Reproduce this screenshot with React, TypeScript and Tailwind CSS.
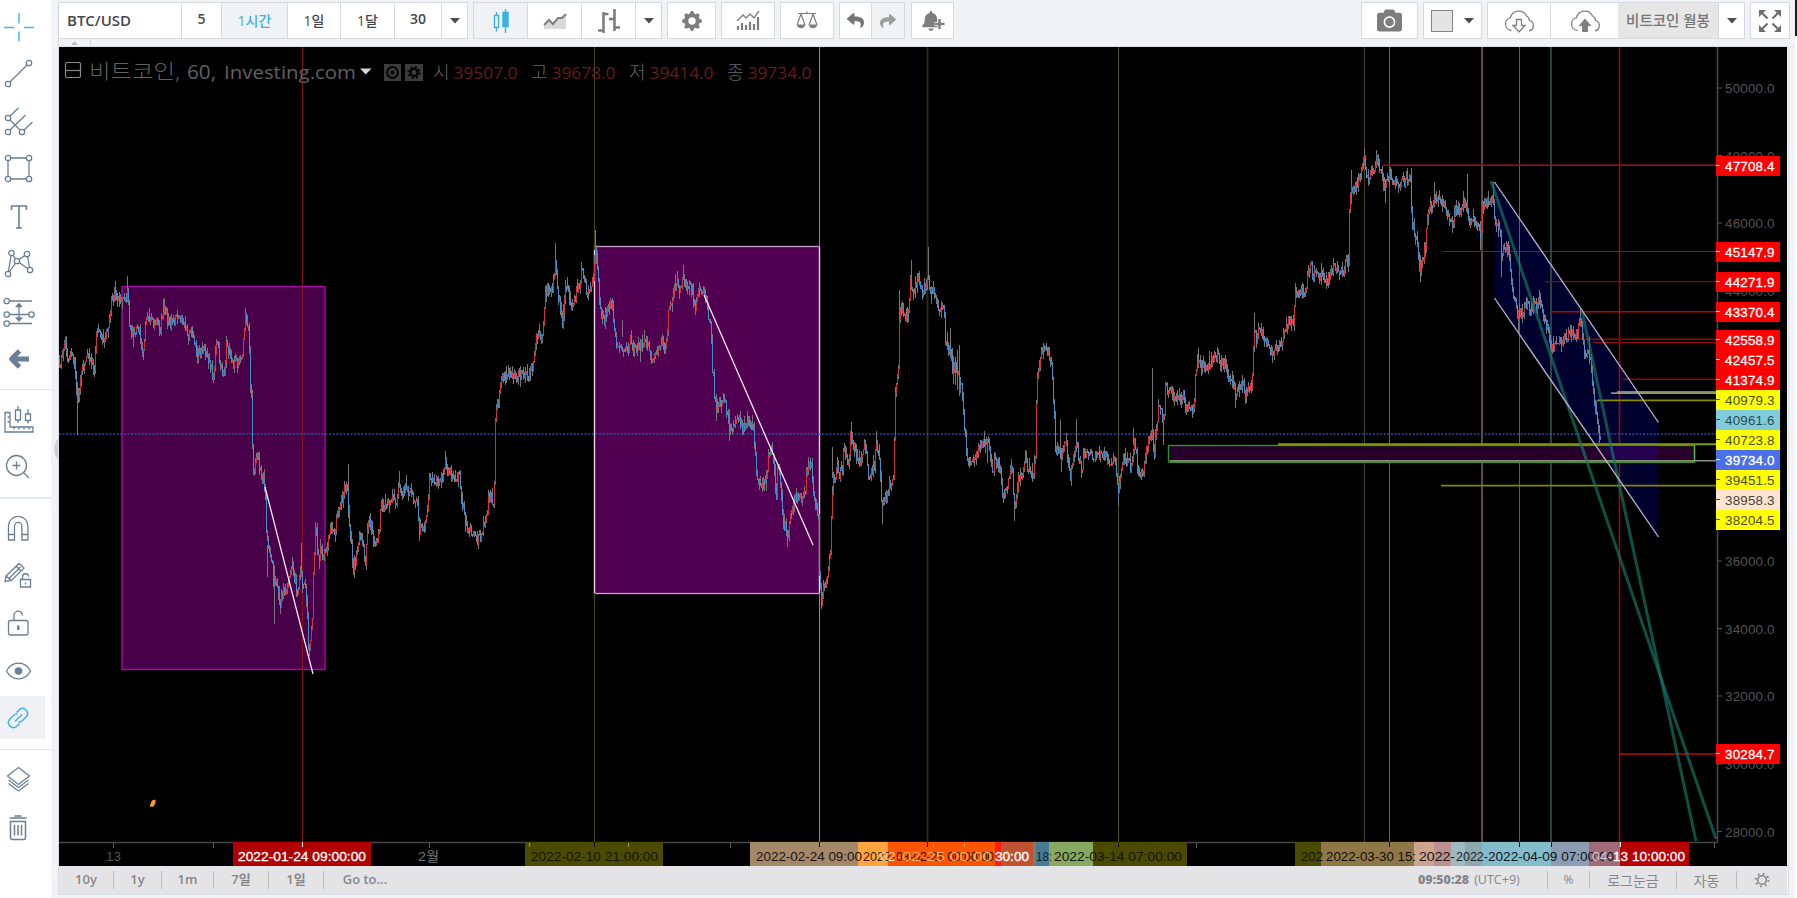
import React from "react";
import { FaCamera, FaReply, FaShare, FaBell } from "react-icons/fa";
import { BsGearFill } from "react-icons/bs";

const FONT = '"Open Sans", "Noto Sans CJK KR", sans-serif';
const ARIAL = '"Liberation Sans", "Noto Sans CJK KR", sans-serif';

/* ---------- price series: anchors in thirds of a pixel, relative to an origin ---------- */
type Segment = { ox: number; oy: number; pts: string };

const SEGMENTS: Segment[] = [
  {
    ox: 60,
    oy: 240,
    pts: "-4,370 0,385 8,350 14,300 18,320 24,370 32,345 40,360 46,380 50,450 52,480 56,480 58,440 62,420 68,385 76,375 82,325 90,345 98,370 104,385 108,290 114,270 122,285 130,290 138,290 146,260 152,215 154,170 160,180 166,165 172,165 178,190 184,180 190,180 196,175 200,170 203,140 206,200 210,265 218,290 224,285 232,270 238,270 244,300 249,350 253,300 256,240 262,235 268,225 276,245 284,255 292,245 298,260 302,270 306,225 312,205 318,210 324,235 332,255 340,240 350,240 356,220 364,235 372,245 380,270 388,285 396,270 404,300 410,335 418,350 426,325 434,335 444,355 452,390 460,400 466,380 470,310 476,310 480,380 486,390 490,410 496,390 500,320 504,320 510,345 518,375 528,365 536,355 546,350 552,300 556,225 560,240 566,265 568,310 570,430 576,480 578,570 580,690 584,700 588,650 594,650 600,700 604,690 608,700 614,730 618,820 622,900 630,930 638,980 644,1020 650,1030 656,1060 662,1090 668,1050 676,1050 684,1040 690,1020 694,980 700,980 706,1020 714,1050 718,1020 724,990 728,1030 736,1040 742,1090 746,1200 750,1240 754,1200 758,1120 762,970 766,860 772,900 778,950 784,930 790,960 796,920 802,920 810,870 816,880 824,880 832,820 840,800 848,770 856,740 862,750 866,820 870,880 876,930 880,980 886,970 892,930 898,890 904,890 910,910 916,970 920,920 926,840 934,850 942,900 948,920 954,880 960,850 966,790 974,790 984,790 994,785 1002,760 1008,795 1014,750 1018,720 1024,760 1032,750 1040,745 1050,760 1058,765 1068,790 1074,780 1078,870 1086,860 1096,850 1104,810 1110,710 1120,715 1132,720 1142,710 1148,720 1156,670 1164,690 1172,690 1180,705 1190,720 1200,700 1204,780 1212,800 1220,870 1230,870 1242,870 1248,910 1256,890 1264,900 1270,850 1280,830 1286,770 1294,760 1302,800 1306,600 1308,520",
  },
  {
    ox: 480,
    oy: 220,
    pts: "52,560 58,550 62,480 68,465 78,465 88,465 98,460 108,465 118,462 130,462 142,465 150,455 160,440 164,400 170,340 178,340 186,350 192,320 196,230 204,195 212,215 220,200 226,120 230,150 234,220 242,260 250,310 256,190 264,200 272,260 282,240 292,210 300,200 306,150 314,190 322,220 330,210 336,180 341,180 345,110 350,90 354,150 358,220 364,290 374,300 382,270 390,250 398,250 404,340 410,375 418,385 428,395 438,385 446,390 452,340 458,395 466,385 476,380 486,370 494,360 502,370 510,395 518,435 526,410 536,395 544,350 552,390 560,370 566,270 576,250 584,200 592,190 600,210 610,180 618,200 626,210 634,190 640,210 646,260 652,230 658,200 666,215 674,230 680,240 686,290 692,310 696,410 702,490 708,560 716,550 724,555 734,535 740,570 746,610 754,620 762,605 770,600 778,590 786,625 796,610 804,605 814,615 822,640 828,740 832,790 842,790 852,790 860,780 866,720 872,690 880,700 886,760 889,860 892,750 898,740 904,800 910,910 918,920 924,950 930,900 938,860 946,830 954,830 962,820 970,840 978,810 982,740 988,720 996,740 1002,830 1008,860 1014,880 1018,940 1020,1060 1024,1150 1030,1110 1036,1090 1044,1050 1052,990 1055,900 1058,800 1064,770 1072,750 1080,760 1088,750 1092,670 1098,710 1106,720 1112,650 1118,660 1126,690 1134,720 1142,720 1150,690 1158,690 1164,740 1168,780 1176,750 1184,730 1188,670 1194,690 1200,740 1206,860 1212,850 1220,840 1230,790 1238,790 1243,790 1246,540 1250,490 1256,450 1258,300 1264,270 1272,290 1284,280 1288,250 1292,150 1296,220 1304,220 1312,180 1318,190 1326,220 1334,200 1342,200 1344,150 1350,220 1360,210 1370,230 1376,270",
  },
  {
    ox: 900,
    oy: 240,
    pts: "118,210 126,215 132,180 135,280 140,310 148,330 152,320 158,390 166,380 176,390 182,430 188,480 194,560 198,620 204,665 212,655 222,655 232,640 240,610 250,610 260,605 268,620 274,680 278,710 284,670 290,650 298,670 304,700 308,770 314,770 322,740 330,690 336,670 340,740 344,800 350,760 358,710 366,710 374,660 382,680 390,700 398,700 404,670 408,620 412,420 418,370 426,340 434,320 442,340 450,350 456,380 460,470 464,540 466,630 476,640 486,640 492,620 498,610 504,650 510,710 518,670 526,620 530,600 536,650 546,700 552,650 562,645 572,640 584,645 596,645 608,640 620,650 628,680 636,665 644,660 650,710 654,770 660,720 666,680 674,650 684,665 694,690 700,640 704,600 710,660 720,710 728,690 736,650 744,610 752,600 758,590 764,640 770,560 776,510 784,510 792,540 796,440 804,450 812,440 822,480 832,465 842,475 852,465 856,510 866,495 876,515 884,480 888,390 896,370 906,375 918,385 930,370 940,350 948,340 958,355 968,365 978,390 988,420 998,420 1008,470 1018,440 1028,430 1038,460 1048,440 1056,430 1060,350 1064,280 1070,300 1078,260 1088,280 1100,300 1110,340 1120,340 1130,320 1138,310 1146,310 1152,260 1160,260 1168,240 1176,255 1182,250 1185,155 1196,155 1208,150 1220,150 1226,90 1232,60 1238,110 1246,105 1256,110 1268,105 1280,115 1290,110 1300,85 1310,80 1320,90 1330,95 1338,60 1344,60",
  },
  {
    ox: 1250,
    oy: 130,
    pts: "296,390 298,250 302,190 310,180 320,170 330,140 338,110 344,80 350,130 358,140 366,125 374,115 382,90 390,110 398,140 406,160 414,140 422,140 432,150 440,150 450,160 458,150 468,160 478,140 482,150 486,270 494,300 502,320 508,420 514,410 522,370 528,350 532,270 538,230 546,240 554,200 562,215 572,215 582,210 590,260 598,270 606,285 616,240 626,245 634,230 642,215 650,220 656,280 666,260 678,270 686,290 692,330 698,230 706,210 716,210 726,210 732,240 738,290 748,290 756,370 762,360 770,345 776,370 784,440 790,490 798,510 804,560 810,545 820,540 830,520 840,540 850,530 860,530 870,510 878,540 886,580 894,600 900,630 906,660 914,640 926,635 938,630 950,620 962,600 974,615 984,610 990,560 998,590 1002,680 1010,670 1018,655 1022,700 1028,760 1034,820 1040,840 1044,880 1048,940 1052,930",
  },
];

/* long shadows: x, top, bottom */
const SPIKES: number[][] = [
  [77, 400, 435], [115, 281, 300], [127, 276, 300], [164, 298, 312], [245, 308, 320], [274, 565, 624],
  [348, 464, 494], [399, 471, 484], [445, 451, 465], [301, 543, 570], [267, 545, 577],
  [555, 243, 262], [595, 230, 250], [683, 265, 280], [716, 394, 421], [729, 410, 441], [787, 530, 547],
  [832, 447, 478], [851, 422, 440], [876, 431, 446], [882, 500, 524], [899, 290, 320], [911, 260, 280],
  [928, 247, 275], [950, 328, 350], [953, 356, 384], [955, 357, 385], [957, 350, 390], [959, 345, 396], [987, 441, 463],
  [1014, 500, 521], [1060, 420, 450], [1061, 450, 472], [1076, 419, 450], [1152, 368, 440],
  [1163, 420, 445], [1133, 428, 445], [1198, 348, 365], [1235, 392, 408], [1254, 313, 340],
  [1351, 170, 195], [1364, 148, 165], [1376, 150, 165], [1411, 168, 185], [1434, 182, 200],
  [1467, 174, 205], [1480, 235, 250], [1501, 230, 277], [1493, 182, 200], [1539, 290, 305], [1518, 315, 332],
  [1385, 180, 203], [1420, 255, 282], [640, 340, 362], [622, 320, 337],
];

const ANCHORS: [number, number][] = SEGMENTS.flatMap((s) =>
  s.pts.split(" ").map((p): [number, number] => {
    const [x, y] = p.split(",").map(Number);
    return [s.ox + x / 3, s.oy + y / 3];
  })
);

function buildCandles() {
  let seed = 90127;
  const rnd = () => {
    seed = (seed * 1103515245 + 12345) % 2147483648;
    return seed / 2147483648;
  };
  let up = "";
  let down = "";
  let wick = "";
  let i = 0;
  let prev = ANCHORS[0][1];
  for (let x = 59; x < 1601; x += 0.7) {
    while (i < ANCHORS.length - 2 && ANCHORS[i + 1][0] < x) i++;
    const [x0, y0] = ANCHORS[i];
    const [x1, y1] = ANCHORS[i + 1];
    const t = Math.min(1, Math.max(0, (x - x0) / (x1 - x0)));
    const close = y0 + (y1 - y0) * t + (rnd() - 0.5) * 10;
    const top = Math.min(prev, close);
    const bottom = Math.max(prev, close);
    const hi = top - rnd() * rnd() * 10;
    const lo = bottom + rnd() * rnd() * 10;
    const cx = Math.floor(x) + 0.5;
    wick += `M${cx} ${hi.toFixed(1)}V${lo.toFixed(1)}`;
    const body = `M${cx} ${top.toFixed(1)}V${(bottom + 1).toFixed(1)}`;
    if (close < prev) up += body;
    else down += body;
    prev = close;
  }
  for (const [x, a, b] of SPIKES) wick += `M${x + 0.5} ${a}V${b}`;
  return { up, down, wick };
}

const CANDLES = buildCandles();

/* ---------- axis data ---------- */
const PRICE_TICKS: [string, number][] = [
  ["50000.0", 88], ["48000.0", 155.5], ["46000.0", 223], ["44000.0", 290.5],
  ["36000.0", 561], ["34000.0", 628.5], ["32000.0", 696], ["30000.0", 764], ["28000.0", 831.5],
];

const PRICE_TAGS: [string, number, string, string][] = [
  ["47708.4", 166, "#ff0000", "#fff"], ["45147.9", 252, "#ff0000", "#fff"], ["44271.9", 282, "#ff0000", "#fff"],
  ["43370.4", 312, "#ff0000", "#fff"], ["42558.9", 340, "#ff0000", "#fff"], ["42457.5", 360, "#ff0000", "#fff"],
  ["41374.9", 380, "#ff0000", "#fff"], ["40979.3", 400, "#ffff00", "#4a4a20"], ["40961.6", 420, "#80ccdb", "#2f4a50"],
  ["40723.8", 440, "#ffff00", "#4a4a20"], ["39734.0", 460, "#4a6fe8", "#fff"], ["39451.5", 480, "#ffff00", "#4a4a20"],
  ["38958.3", 500, "#fde4cf", "#4c423a"], ["38204.5", 520, "#ffff00", "#4a4a20"], ["30284.7", 754, "#ff0000", "#fff"],
];

const V_LINES: [number, string, number][] = [
  [302.5, "#8c0d12", 1], [594.5, "#4a4a10", 1], [819.5, "#a3836a", 1], [927.5, "#30300a", 1.8], [1118.5, "#505018", 1],
  [1364.5, "#44440f", 1], [1389.5, "#6b5c50", 1], [1482, "#5c4a45", 2], [1519.5, "#426a70", 1], [1551, "#284246", 2],
  [1619.5, "#8e1010", 1.6],
];

const H_LINES: [number, number, string, number][] = [
  [1383, 165.3, "#a80c0c", 1.4], [1443, 251.5, "#a80c0c", 1.2], [1545, 281.7, "#840a0a", 1.2], [1551, 311.7, "#a80c0c", 1.4],
  [1560, 339.2, "#8c0a0a", 1.4], [1593, 342.6, "#8c0a0a", 1.4], [1623, 379.2, "#8c0a0a", 1.4],
  [1617, 391.8, "#b9b93c", 1.2], [1611, 393.2, "#b8ccb8", 1.2], [1597, 400.4, "#8c8c00", 1.6],
  [1441, 485.7, "#868600", 1.8], [1620, 754, "#b00c0c", 1.3],
];

const TIME_BANDS: [number, number, string][] = [
  [232.5, 370.5, "#b00000"], [525, 663, "#4a4a00"], [750, 858, "#a58868"], [858, 888, "#ffa53f"], [888, 995, "#ff5500"],
  [995, 1001, "#ff1a10"], [1001, 1033, "#c0522f"], [1033, 1036, "#7c8060"], [1036, 1049, "#487a96"],
  [1049, 1093, "#86a860"], [1093, 1187, "#4a4a00"], [1295, 1321, "#4a4a00"], [1321, 1414, "#8f7748"],
  [1414, 1434, "#cfa48e"], [1434, 1451, "#bb9090"], [1451, 1465, "#9cbac0"], [1465, 1482, "#8ea8b0"],
  [1482, 1551, "#84bccb"], [1551, 1589, "#8c9cb2"], [1589, 1620, "#a06a78"], [1620, 1689, "#b80000"],
];

const TIME_TEXTS: [string, number, number, string, boolean][] = [
  ["13", 106, 15, "#55555a", false],
  ["2월", 418, 21, "#77777a", false],
  ["2022-01-24 09:00:00", 238, 128, "#ffffff", true],
  ["2022-02-10 21:00:00", 531, 127, "#14140a", false],
  ["2022-02-24 09:00", 756, 106, "#1a1510", false],
  ["2022-", 863, 32, "#3a1c08", false],
  ["02-", 880, 20, "#ffd9a0", false],
  ["03-02-21 00:00:00", 896, 98, "#2c1004", false],
  ["02-25 00:00", 902, 90, "#ffb060", false],
  ["30:00", 995, 34, "#ffffff", true],
  ["18:", 1036, 16, "#14202a", false],
  ["2022-03-14 07:00:00", 1054, 128, "#14140a", false],
  ["202", 1301, 22, "#14140a", false],
  ["2022-03-30 15:", 1326, 90, "#100c06", false],
  ["2022-", 1419, 36, "#20140e", false],
  ["2022-", 1456, 32, "#182428", false],
  ["2022-04-09 07:00:00", 1488, 126, "#0a1418", false],
  ["04-", 1592, 20, "#dcc8d0", false],
  ["13 10:00:00", 1613, 72, "#ffffff", true],
];

function Chart() {
  return (
    <svg width={1728} height={819} viewBox="59 47 1728 819" className="block bg-black">
      <path d="M1494.5 182L1658.5 422.5V537L1494.5 298Z" fill="#00002e" />
      <rect x={122} y={286.5} width={203} height={383} fill="#480048" stroke="#a50aa8" strokeWidth={1.4} />
      <rect x={594.5} y={246.5} width={225} height={347} fill="#510051" stroke="#c9a0cc" strokeWidth={1.3} />

      {V_LINES.map(([x, c, w]) => (
        <line key={x} x1={x} x2={x} y1={47} y2={842} stroke={c} strokeWidth={w} />
      ))}
      <path d="M594.5 250V593M819.5 247V593" stroke="#e6d2e2" strokeWidth={1.2} />

      <rect x={1168.5} y={445.5} width={526} height={16.5} fill="#26002a" stroke="#2f8f2f" strokeWidth={1.4} />
      <path d="M1603 446L1611 460H1658V446Z" fill="#230050" />
      <line x1={1278} x2={1716} y1={444.3} y2={444.3} stroke="#7f9c08" strokeWidth={2} />
      <line x1={1170} x2={1716} y1={460.8} y2={460.8} stroke="#8d8f78" strokeWidth={1.6} />
      <line x1={1170} x2={1694} y1={462.3} y2={462.3} stroke="#3f9f3f" strokeWidth={1} />
      <line x1={1694.5} x2={1694.5} y1={445} y2={462} stroke="#48c048" strokeWidth={1.2} />

      {H_LINES.map(([x, y, c, w]) => (
        <line key={y} x1={x} x2={1716} y1={y} y2={y} stroke={c} strokeWidth={w} />
      ))}
      <line x1={59} x2={1716} y1={434.2} y2={434.2} stroke="#3f5cb0" strokeWidth={1.3} strokeDasharray="2 1.6" />

      <g shapeRendering="crispEdges" fill="none" strokeWidth={1}>
        <path d={CANDLES.wick} stroke="#77757a" />
        <path d={CANDLES.up} stroke="#d0303a" />
        <path d={CANDLES.down} stroke="#3a94d8" strokeOpacity={0.82} />
      </g>

      <g stroke="#157864" strokeOpacity={0.68} strokeWidth={3}>
        <path d="M1491 181L1716 839" />
        <path d="M1582 311L1696 841" />
      </g>
      <path d="M1494.5 182L1658.5 422.5M1494.5 298L1658.5 537" stroke="#b9b4c8" strokeWidth={1.3} />
      <path d="M265 487L313 674M704 295L813 545" stroke="#f4e6f4" strokeWidth={1.3} />
      <path d="M150 805l2-4.500 3.500-1v3.500l-2 3.500-3 .5z" fill="#f5a020" />

      {/* legend */}
      <g stroke="#8a8a8a" fill="none" strokeWidth={1.2}>
        <rect x={65.5} y={62.5} width={15} height={15} rx={1.5} />
        <path d="M66 70.5H80" />
      </g>
      <g fontFamily={FONT} fontWeight={300}>
        <g fontSize={20} fill="#606060">
          <text x={89} y={78.5} textLength={91} lengthAdjust="spacingAndGlyphs">비트코인,</text>
          <text x={187} y={78.5} fontWeight={400} textLength={29} lengthAdjust="spacingAndGlyphs">60,</text>
          <text x={224} y={78.5} fontSize={19} fontWeight={400} textLength={132} lengthAdjust="spacingAndGlyphs">Investing.com</text>
        </g>
        <path d="M360 68.5H371.5L365.7 74.5Z" fill="#d8d8d8" />
        <g>
          <rect x={384} y={64} width={17} height={17} fill="#3c3c3c" />
          <circle cx={392.5} cy={72.5} r={5.4} fill="none" stroke="#050505" strokeWidth={2} />
          <circle cx={392.5} cy={72.5} r={2} fill="#050505" />
          <rect x={405} y={64} width={18} height={17} fill="#3c3c3c" />
          <circle cx={414} cy={72.5} r={3.6} fill="none" stroke="#050505" strokeWidth={2.4} />
          <circle cx={414} cy={72.5} r={5.6} fill="none" stroke="#050505" strokeWidth={2} strokeDasharray="2.2 2.2" />
        </g>
        {(
          [
            ["시", "39507.0", 433], ["고", "39678.0", 531], ["저", "39414.0", 629], ["종", "39734.0", 727],
          ] as [string, string, number][]
        ).map(([k, v, x]) => (
          <React.Fragment key={k}>
            <text x={x} y={78.5} fontSize={18} fill="#666666">{k}</text>
            <text x={x + 20.5} y={78.5} fontSize={17} fontWeight={400} fill="#641c1c" textLength={64} lengthAdjust="spacingAndGlyphs">{v}</text>
          </React.Fragment>
        ))}
      </g>

      {/* axes */}
      <path d="M59 842.5H1717.5M1717.5 47V842.5" stroke="#47474b" strokeWidth={1.6} fill="none" />
      <path d="M113.5 843v5M213.5 843v5M429.5 843v5M730.5 843v5M1196.5 843v5M1714.5 843v5" stroke="#55555a" />
      <g fontFamily={ARIAL} fontSize={13.4}>
        {PRICE_TICKS.map(([t, y]) => (
          <React.Fragment key={t}>
            <line x1={1717} x2={1722} y1={y} y2={y} stroke="#55555a" />
            <text x={1725} y={y + 5} fill="#535357" textLength={49.5}>{t}</text>
          </React.Fragment>
        ))}
        {PRICE_TAGS.map(([t, y, bg, fg]) => (
          <React.Fragment key={t}>
            <rect x={1716} y={y - 10} width={64} height={20} fill={bg} />
            <line x1={1716} x2={1720} y1={y - 0.5} y2={y - 0.5} stroke={fg} />
            <text x={1725} y={y + 5} fill={fg} stroke={fg} strokeWidth={fg === "#fff" ? 0.3 : 0} textLength={49.5}>{t}</text>
          </React.Fragment>
        ))}
      </g>
      <g shapeRendering="crispEdges">
        {TIME_BANDS.map(([a, b, c]) => (
          <rect key={a} x={a} y={842} width={b - a} height={24} fill={c} />
        ))}
      </g>
      <path d="M302.5 842v5M1620.5 842v5" stroke="#fff" />
      <path d="M594.5 842v5M819.5 842v5M927.5 842v5M1118.5 842v5M1389.5 842v5M1519.5 842v5M1551.5 842v5" stroke="#000" />
      <path d="M529.5 843v4M628.5 843v4M933.5 843v4M964.5 843v4" stroke="#d8d0a0" strokeOpacity={0.6} />
      <g fontFamily={ARIAL} fontSize={13}>
        {TIME_TEXTS.map(([t, x, w, c, strong]) => (
          <text key={t + x} x={x} y={861} fill={c} stroke={c} strokeWidth={strong ? 0.3 : 0} textLength={w} lengthAdjust="spacingAndGlyphs">
            {t}
          </text>
        ))}
      </g>
    </svg>
  );
}

/* ---------- left tool column ---------- */
const dot = (x: number, y: number) => <circle key={`${x}-${y}`} cx={x} cy={y} r={2.7} fill="#fff" />;

const TOOLS: Record<string, React.ReactNode> = {
  cross: <path d="M15 1v10.5M15 19.5v10M0 15.5h10.5M20 15.5h10" stroke="#4bb4e6" strokeWidth={1.5} />,
  trend: <><path d="M4 25L25 4" />{dot(4, 25)}{dot(25, 4)}</>,
  pitchfork: <><path d="M4 11l10.5-10M4 25L21.500 8M18 25l10.500-10M4 11l14 14" />{dot(4, 11)}{dot(4, 25)}{dot(18, 25)}</>,
  shape: <><path d="M4 4h21v21H4z" />{dot(4, 4)}{dot(25, 4)}{dot(4, 25)}{dot(25, 25)}</>,
  text: <path d="M7.500 8V4h15v4M15 4v22M12 26h6" strokeWidth={1.6} />,
  pattern: <><path d="M4 25L7.500 4L13 12L26 21L23 5L13 12Z" />{dot(7.5, 4)}{dot(23, 5)}{dot(13, 12)}{dot(4, 25)}{dot(26, 21)}</>,
  position: <><path d="M2 4h26M2 17.500h26M2 26.500h26M15 7v16" /><path d="M12.500 9.500L15 6.500l2.500 3zM12.500 21L15 24l2.500-3z" fill="#6a7f95" />{dot(2.700, 4)}{dot(2.700, 17.500)}{dot(2.700, 26.500)}{dot(27.500, 17.500)}</>,
  arrow: <path d="M25 15H8M15.500 7L7.500 15l8 8" strokeWidth={4.800} strokeLinejoin="round" />,
  measure: <path d="M1 7.500h5V22h23v5H1zM3.500 12H6M3.500 17H6M10 22v2.500M15 22v2.500M20 22v2.500M25 22v2.500M11.500 5h5v10h-5zM14 1v4M14 15v3M21.500 9h5v6.500h-5zM24 4v5M24 15.500v3" />,
  zoom: <><circle cx={12.500} cy={13.500} r={10} /><path d="M20 21l5 5M12.500 9.500v8M8.500 13.500h8" /></>,
  magnet: <path d="M4.500 27V13a9.700 9.700 0 0 1 19.400 0v14h-6V13a3.700 3.700 0 0 0-7.400 0v14zM4.500 21.500h6M17.900 21.500h6" />,
  pencil: <path d="M2 16L15 3.500l5 4.500L7.500 20.500L1 21.500zM12 6l5 5M2 16l5 4.500M5 18.500L16.500 7M16.500 19.500h10v7.500h-10zM18.500 19.500v-2.500a3 3 0 0 1 6-.5M21.500 22.500v2" />,
  lock: <><rect x={4.500} y={12.500} width={19.500} height={14.500} rx={2} /><path d="M10 12.500V7.500a4.300 4.300 0 0 1 8.600 0" /><path d="M14.300 17.500v4.500" strokeWidth={2.400} /></>,
  eye: <><path d="M2.500 16C8 5.500 21 5.500 26.500 16C21 26.500 8 26.500 2.500 16Z" /><circle cx={14.500} cy={16} r={3.800} fill="#6a7f95" stroke="none" /></>,
  link: <path d="M12.500 9.500l3-3a5 5 0 0 1 7 7l-4 4a5 5 0 0 1-4 1.400M15.500 20.500l-3 3a5 5 0 0 1-7-7l4-4a5 5 0 0 1 4-1.400M11 18.500l7-7" stroke="#3fb0ea" strokeWidth={1.500} />,
  layers: <path d="M14.500 2.500L25.500 11l-11 8.500L3.500 11zM4.500 15l10 7.500L24.500 15M4.500 18.500l10 7.500 10-7.500" />,
  trash: <path d="M6.500 9.500h15V25.500a2 2 0 0 1-2 2h-11a2 2 0 0 1-2-2zM5.500 6h17M10.500 4h7M10.500 13v10.500M14 13v10.500M17.500 13v10.500" strokeWidth={1.500} />,
};

function ToolGroup({ items, className }: { items: string[]; className: string }) {
  return (
    <div className={`flex flex-col ${className}`}>
      {items.map((n) => (
        <button key={n} aria-label={n} className={`flex h-[47.5px] w-[45px] items-center pl-1 ${n === "link" ? "bg-[linear-gradient(#fff_2px,#eff1f4_2px,#eff1f4_45px,#fff_45px)]" : ""}`}>
          <svg width={30} height={30} viewBox="0 0 30 30" className="overflow-visible" fill="none" stroke="#6a7f95" strokeWidth={1.3}>
            {TOOLS[n]}
          </svg>
        </button>
      ))}
    </div>
  );
}

/* ---------- header ---------- */
function Cell({ w, children, active, last }: { w: string; children: React.ReactNode; active?: boolean; last?: boolean }) {
  return (
    <div className={`flex h-full shrink-0 items-center justify-center ${w} ${active ? "bg-[#f0f2f5]" : "bg-white"} ${last ? "" : "border-r border-[#d6dade]"}`}>
      {children}
    </div>
  );
}

function Group({ children, className = "" }: { children: React.ReactNode; className?: string }) {
  return <div className={`flex h-[37px] shrink-0 border border-[#d6dade] ${className}`}>{children}</div>;
}

const Caret = () => (
  <svg width={10} height={6} viewBox="0 0 10 6"><path d="M0 0h10L5 5.500z" fill="#4a4a4a" /></svg>
);

const CLOUD = "M8.500 21.500a6.500 6.500 0 0 1-1-12.800A8.500 8.500 0 0 1 23.500 7a5.500 5.500 0 0 1 3 4.500a5.300 5.300 0 0 1-.5 10.300";

function Header() {
  return (
    <header className="flex h-[39px] items-start pt-[2px] text-[14px] font-semibold text-[#46484c]">
      <Group>
        <Cell w="w-[123px]"><span className="w-full pl-[8px] text-[15px]">BTC/USD</span></Cell>
        <Cell w="w-[40px]"><span className="pb-1">5</span></Cell>
        <Cell w="w-[66px]" active><span className="font-medium text-[#41b0e2]">1시간</span></Cell>
        <Cell w="w-[53px]"><span className="font-medium">1일</span></Cell>
        <Cell w="w-[54px]"><span className="font-medium">1달</span></Cell>
        <Cell w="w-[47px]"><span className="pb-1">30</span></Cell>
        <Cell w="w-[25px]" last><Caret /></Cell>
      </Group>
      <Group className="ml-[5px]">
        <Cell w="w-[54px]" active>
          <svg width={20} height={26} viewBox="0 0 20 26" fill="none" stroke="#3cb0e4" strokeWidth={1.400}>
            <path d="M3.500 7.500h4v12h-4zM5.500 4v3.500M5.500 19.500v4" />
            <path d="M12 4.500h5v14h-5z" fill="#3cb0e4" /><path d="M14.500 1v24" />
          </svg>
        </Cell>
        <Cell w="w-[54px]">
          <svg width={24} height={18} viewBox="0 0 24 18">
            <path d="M1 13L6 8l4 4 5-6h4l4-4v15H1z" fill="#d9d9d9" />
            <path d="M1 13L6 8l4 4 5-6h4l4-4" fill="none" stroke="#7d7d7d" strokeWidth={2} />
          </svg>
        </Cell>
        <Cell w="w-[54px]">
          <svg width={24} height={26} viewBox="0 0 24 26" fill="none" stroke="#7d7d7d" strokeWidth={2.600}>
            <path d="M6.500 4v21M1 22.500h5.500M6.500 6h5M17.500 1v22M12 11h5.500M17.500 19.500h5.500" />
          </svg>
        </Cell>
        <Cell w="w-[25px]" last><Caret /></Cell>
      </Group>
      <Group className="ml-[5px]"><Cell w="w-[47px]" last><BsGearFill size={20} color="#7d7d7d" /></Cell></Group>
      <Group className="ml-[5px]">
        <Cell w="w-[52px]" last>
          <svg width={24} height={21} viewBox="0 0 24 21" fill="none" stroke="#7d7d7d">
            <path d="M2 20v-4M6 20v-7M10 20v-5M14 20v-8M18 20v-6M22 20V7" strokeWidth={2.200} />
            <path d="M1 11l6-6 3 3 4-4 4 4 5-7" strokeWidth={1.300} />
          </svg>
        </Cell>
      </Group>
      <Group className="ml-[5px]">
        <Cell w="w-[52px]" last>
          <svg width={22} height={19} viewBox="0 0 22 19" fill="none" stroke="#7d7d7d" strokeWidth={1.200}>
            <path d="M2 2.500h18M11 .5v2M5 3L1 14M5 3l4 11M17 3l-4 11M17 3l4 11" />
            <path d="M.8 13.500h8.500c-.5 5-8 5-8.500 0zM12.800 13.500h8.500c-.5 5-8 5-8.500 0z" fill="#7d7d7d" stroke="none" />
          </svg>
        </Cell>
      </Group>
      <Group className="ml-[5px]">
        <Cell w="w-[32px]"><FaReply size={17} color="#767676" /></Cell>
        <Cell w="w-[32px]" active last><FaShare size={16} color="#9c9c9c" /></Cell>
      </Group>
      <Group className="ml-[6px]">
        <Cell w="w-[41px]" last>
          <div className="flex items-end">
            <FaBell size={20} color="#7d7d7d" />
            <svg width={11} height={12} viewBox="0 0 10 12" className="-ml-[7px]"><path d="M5 0v10M0 5h10" stroke="#fff" strokeWidth={4} /><path d="M5 0v10M0 5h10" stroke="#7d7d7d" strokeWidth={2.400} /></svg>
          </div>
        </Cell>
      </Group>

      <Group className="ml-auto"><Cell w="w-[55px]" last><FaCamera size={25} color="#7d7d7d" /></Cell></Group>
      <Group className="ml-[5px]">
        <Cell w="w-[57px]" last>
          <div className="flex items-center gap-[11px]">
            <span className="h-[22px] w-[22px] border-[1.5px] border-[#858585] bg-[#e4e4e4]" />
            <Caret />
          </div>
        </Cell>
      </Group>
      <Group className="ml-[5px]">
        <Cell w="w-[63px]">
          <svg width={34} height={24} viewBox="0 0 34 24" fill="none" stroke="#808080" strokeWidth={1.300}>
            <path d={CLOUD} transform="translate(1 0)" />
            <path d="M14.500 10.500h5v6h3.500l-6 6.500-6-6.500h3.500z" fill="#fff" />
          </svg>
        </Cell>
        <Cell w="w-[67px]" last>
          <svg width={34} height={24} viewBox="0 0 34 24" fill="none" stroke="#808080" strokeWidth={1.300}>
            <path d={CLOUD} transform="translate(1 0)" />
            <path d="M14 23h6v-6h3.500L17 9.500 10.500 17H14z" fill="#808080" stroke="none" />
          </svg>
        </Cell>
        <div className="flex w-[101px] items-center justify-center border-r border-[#d6dade] bg-[#e6e6e6] text-[14.5px] font-medium whitespace-nowrap text-[#757575]">비트코인 월봉</div>
        <Cell w="w-[25px]" last><Caret /></Cell>
      </Group>
      <Group className="mr-[5px] ml-[5px]">
        <Cell w="w-[38px]" last>
          <svg width={22} height={22} viewBox="0 0 22 22" fill="#6e6e6e" stroke="#6e6e6e">
            <path d="M0 0h7L0 7zM22 0h-7l7 7zM0 22h7L0 15zM22 22h-7l7-7z" stroke="none" />
            <path d="M2 2l6.500 6.500M20 2l-6.500 6.500M2 20l6.500-6.500M20 20l-6.500-6.500" strokeWidth={2.200} />
          </svg>
        </Cell>
      </Group>
    </header>
  );
}

/* ---------- bottom bar ---------- */
const Bar = () => <span className="h-[18px] w-px shrink-0 bg-[#bcbcc0]" />;
const Item = ({ w, children }: { w: string; children: React.ReactNode }) => (
  <span className={`flex shrink-0 items-center justify-center whitespace-nowrap ${w}`}>{children}</span>
);

function Footer() {
  return (
    <footer className="flex h-[28px] w-[1728px] items-center bg-[#e4e4e6] text-[13px] font-semibold text-[#87878b]">
      <Item w="w-[54px]">10y</Item><Bar />
      <Item w="w-[47px]">1y</Item><Bar />
      <Item w="w-[51px]">1m</Item><Bar />
      <Item w="w-[54px]">7일</Item><Bar />
      <Item w="w-[54px]">1일</Item><Bar />
      <Item w="w-[82px]">Go to...</Item>
      <span className="mr-4 ml-auto flex w-[113px] shrink-0 gap-[5px] text-[12.5px] whitespace-nowrap"><b>09:50:28</b><span className="font-normal">(UTC+9)</span></span>
      <Bar />
      <Item w="w-[41px]"><span className="text-[12px] font-normal">%</span></Item><Bar />
      <Item w="w-[86px]"><span className="text-[14px] font-normal">로그눈금</span></Item><Bar />
      <Item w="w-[59px]"><span className="text-[14px] font-normal">자동</span></Item><Bar />
      <Item w="w-[50px]">
        <svg width={16} height={16} viewBox="0 0 16 16" fill="none" stroke="#87878b">
          <circle cx={8} cy={8} r={4.300} strokeWidth={1.600} />
          <circle cx={8} cy={8} r={6.400} strokeWidth={2} strokeDasharray="1.700 3.326" />
        </svg>
      </Item>
    </footer>
  );
}

export default function App() {
  return (
    <div className="flex h-[898px] w-[1797px] overflow-hidden bg-[#f0f2f6]" style={{ fontFamily: FONT }}>
      <aside className="flex w-[51px] shrink-0 flex-col bg-white">
        <ToolGroup items={["cross", "trend", "pitchfork", "shape", "text", "pattern", "position", "arrow"]} className="h-[389px] pt-[3px]" />
        <ToolGroup items={["measure", "zoom"]} className="h-[108px] border-t border-[#dde4ea] pt-[6px]" />
        <ToolGroup items={["magnet", "pencil", "lock", "eye", "link"]} className="h-[252px] border-t-2 border-[#e4eaef] pt-[5px]" />
        <ToolGroup items={["layers", "trash"]} className="border-t border-[#dde4ea] pt-[6px]" />
      </aside>
      <div className="flex w-[7px] shrink-0 items-center justify-end">
        <svg width={5} height={20} viewBox="0 0 5 20"><path d="M5 0C0 3 0 17 5 20z" fill="#d0d0d2" /></svg>
      </div>
      <main className="flex w-[1737px] shrink-0 flex-col">
        <Header />
        <div className="flex h-[8px] items-center border-b border-[#dfe2e6]">
          <div className="flex h-full w-[33px] items-center justify-center border-x border-[#d6dade]">
            <svg width={7} height={4} viewBox="0 0 7 4"><path d="M0 4h7L3.500 0z" fill="#bcbfc4" /></svg>
          </div>
        </div>
        <div className="flex w-[1731px] flex-col border-r border-b border-l border-[#d8dee4]">
          <Chart />
          <Footer />
        </div>
      </main>
      <div className="flex w-[2px] shrink-0 flex-col">
        <div className="h-[36px] bg-[#1c1c1e]" />
        <div className="flex-1 bg-white" />
      </div>
    </div>
  );
}
